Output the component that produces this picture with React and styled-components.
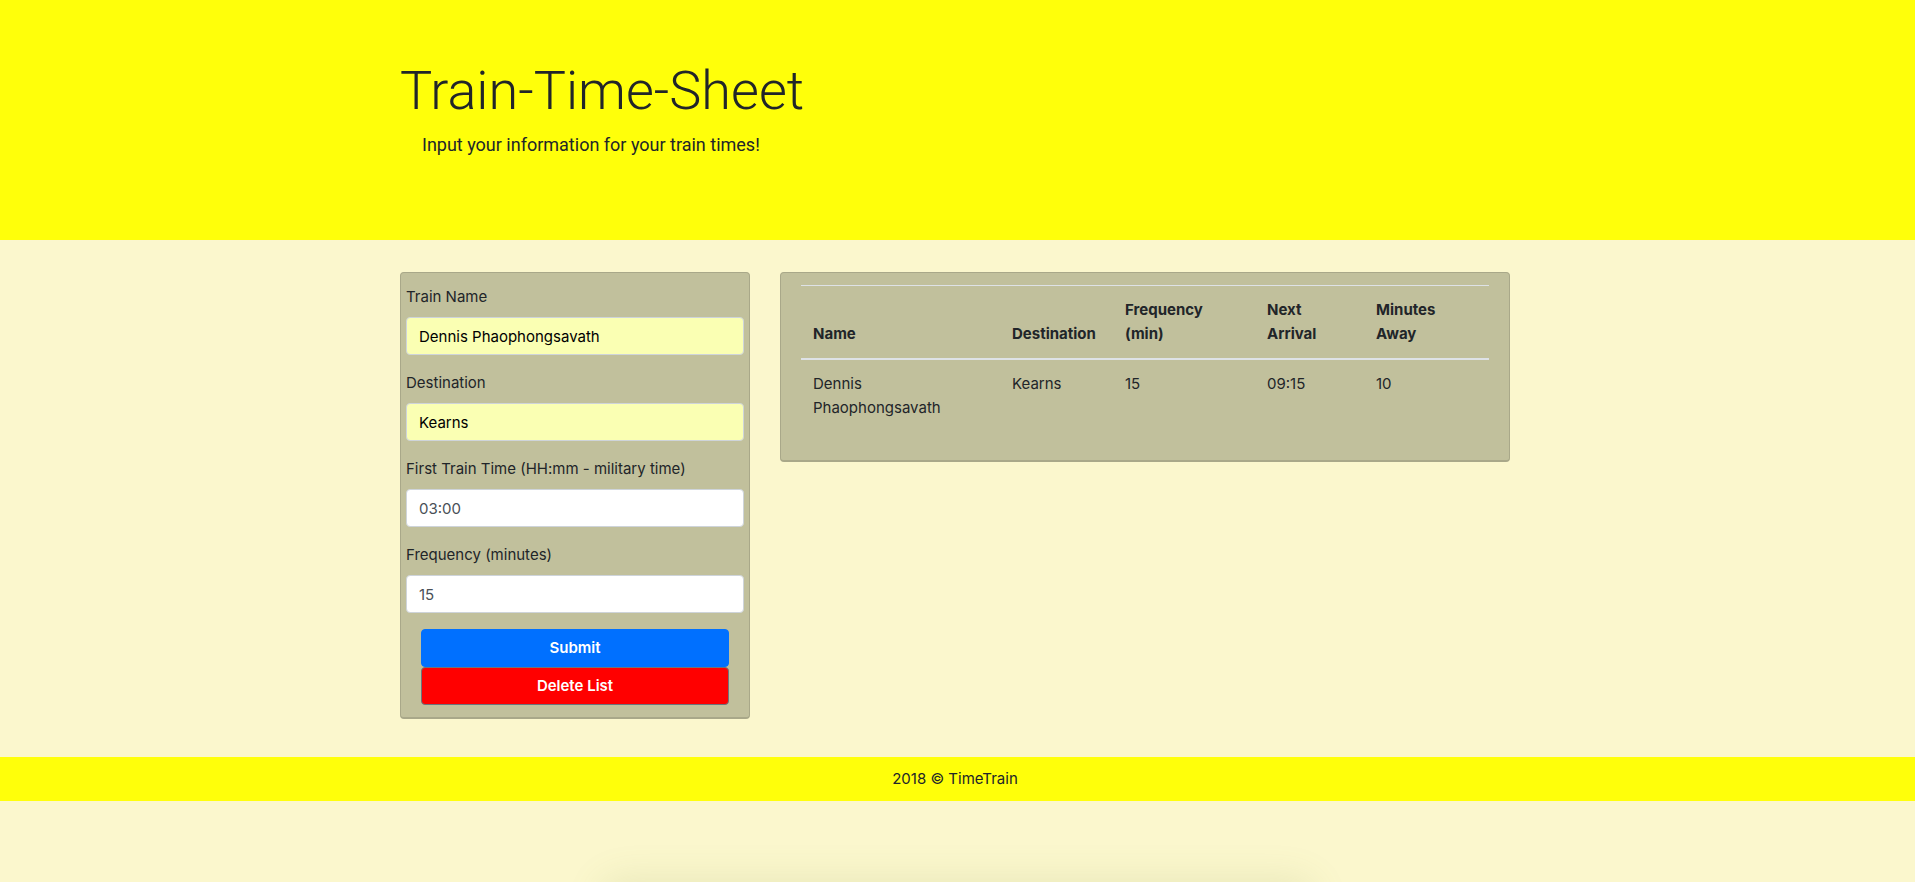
import React from "react";
import styled, { createGlobalStyle } from "styled-components";

const GlobalStyle = createGlobalStyle`
  *, *::before, *::after { box-sizing: border-box; }
  body {
    margin: 0;
    background: #fbf7cd;
    color: #212529;
    font-family: Inter, "Liberation Sans", sans-serif;
    font-size: 15px;
    line-height: 24px;
  }
`;

const Container = styled.div`
  width: 100%;
  max-width: 1140px;
  margin: 0 auto;
  padding: 0 15px;
`;

const Gutter = styled.div`
  padding-right: 5px;
`;

const Hero = styled.header`
  padding: 58px 5px 80px 0;
  background: #ffff0a;
  font-family: Roboto, "Liberation Sans", sans-serif;
`;

const Title = styled.h1`
  margin: 0 0 6px;
  font-size: 54px;
  font-weight: 300;
  line-height: 66px;
`;

const Lead = styled.p`
  margin: 0;
  padding-left: 22px;
  font-size: 18px;
  line-height: 30px;
`;

const Columns = styled.main`
  display: grid;
  grid-template-columns: minmax(0, 350fr) minmax(0, 730fr);
  gap: 30px;
  align-items: start;
  padding: 32px 0 38px;

  @media (max-width: 800px) {
    grid-template-columns: minmax(0, 1fr);
  }
`;

const Card = styled.section`
  padding: 12px ${(p) => p.$inset}px;
  background: #c1c09c;
  border: 1px solid #a9a889;
  border-bottom-width: 2px;
  border-radius: 4px;
`;

const Field = styled.div`
  margin-bottom: 16px;
`;

const Label = styled.label`
  display: block;
  margin-bottom: 8px;
`;

const Input = styled.input`
  display: block;
  width: 100%;
  height: 38px;
  padding: 6px 12px;
  border: 1px solid #ced4da;
  border-radius: 4px;
  background: ${(p) => (p.$filled ? "#faffb3" : "#fff")};
  color: ${(p) => (p.$filled ? "#000" : "#495057")};
  font: inherit;
`;

const Actions = styled.div`
  display: flex;
  flex-direction: column;
  padding: 0 15px;
`;

const Button = styled.button`
  height: 38px;
  padding: 0 12px;
  border: 1px solid ${(p) => (p.$danger ? "#6c757d" : "#0070ff")};
  border-radius: 4px;
  background: ${(p) => (p.$danger ? "#ff0000" : "#0070ff")};
  color: #fff;
  font: inherit;
  font-weight: 600;
  cursor: pointer;
`;

const Table = styled.table`
  width: 100%;
  margin-bottom: 16px;
  table-layout: fixed;
  border-spacing: 0;
`;

const Col = styled.col`
  width: ${(p) => p.$width}px;
`;

const HeadCell = styled.th`
  padding: 12px;
  border-top: 1px solid #dee2e6;
  border-bottom: 2px solid #dee2e6;
  font-weight: 700;
  text-align: left;
  vertical-align: bottom;
`;

const Cell = styled.td`
  padding: 12px;
  vertical-align: top;
`;

const Footer = styled.footer`
  padding: 10px 5px 10px 0;
  background: #ffff0a;
  text-align: center;
`;

const BottomShade = styled.div`
  position: fixed;
  bottom: -30px;
  left: 32%;
  right: 32%;
  height: 20px;
  border-radius: 10px;
  box-shadow: 0 0 36px 14px rgba(130, 150, 80, 0.14);
  pointer-events: none;
`;

const fields = [
  { id: "train-name", label: "Train Name", value: "Dennis Phaophongsavath", filled: true },
  { id: "destination", label: "Destination", value: "Kearns", filled: true },
  { id: "first-time", label: "First Train Time (HH:mm - military time)", value: "03:00" },
  { id: "frequency", label: "Frequency (minutes)", value: "15" },
];

const columns = [
  { title: "Name", width: 199 },
  { title: "Destination", width: 113 },
  { title: "Frequency (min)", width: 142 },
  { title: "Next Arrival", width: 109 },
  { title: "Minutes Away", width: 125 },
];

const trains = [["Dennis Phaophongsavath", "Kearns", "15", "09:15", "10"]];

export default function App() {
  return (
    <>
      <GlobalStyle />
      <Hero>
        <Container>
          <Title>Train-Time-Sheet</Title>
          <Lead>Input your information for your train times!</Lead>
        </Container>
      </Hero>
      <Gutter>
        <Container>
          <Columns>
            <Card as="form" $inset={5} onSubmit={(e) => e.preventDefault()}>
              {fields.map((f) => (
                <Field key={f.id}>
                  <Label htmlFor={f.id}>{f.label}</Label>
                  <Input id={f.id} type="text" defaultValue={f.value} $filled={f.filled} />
                </Field>
              ))}
              <Actions>
                <Button type="submit">Submit</Button>
                <Button type="button" $danger>Delete List</Button>
              </Actions>
            </Card>
            <Card $inset={20}>
              <Table>
                <colgroup>
                  {columns.map((c) => <Col key={c.title} $width={c.width} />)}
                </colgroup>
                <thead>
                  <tr>
                    {columns.map((c) => <HeadCell key={c.title} scope="col">{c.title}</HeadCell>)}
                  </tr>
                </thead>
                <tbody>
                  {trains.map((row) => (
                    <tr key={row[0]}>
                      {row.map((value, i) => <Cell key={columns[i].title}>{value}</Cell>)}
                    </tr>
                  ))}
                </tbody>
              </Table>
            </Card>
          </Columns>
        </Container>
      </Gutter>
      <Footer>2018 © TimeTrain</Footer>
      <BottomShade />
    </>
  );
}
